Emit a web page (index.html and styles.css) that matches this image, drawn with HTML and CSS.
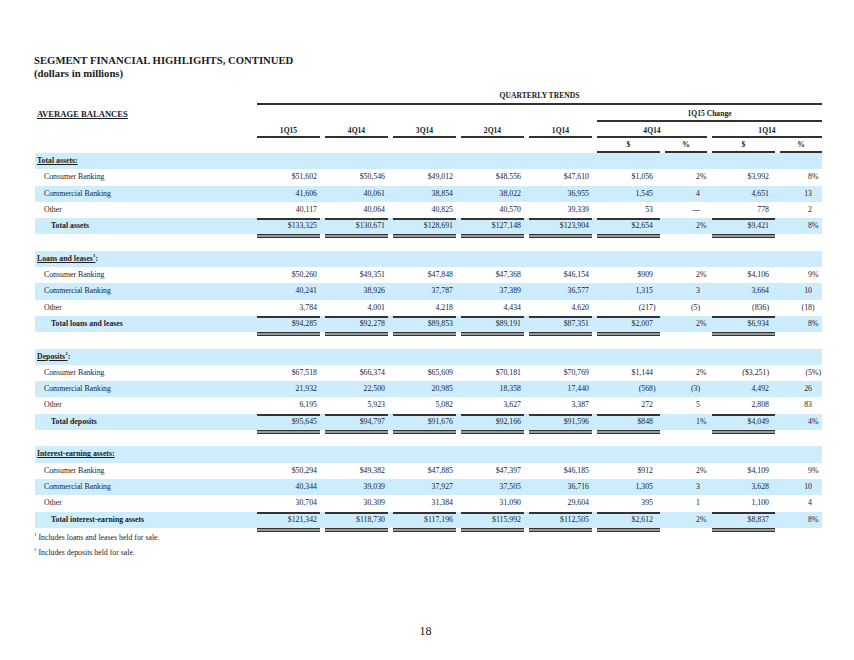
FILE: index.html
```html
<!DOCTYPE html>
<html lang="en">
<head>
    <meta charset="UTF-8">
    <meta name="viewport" content="width=device-width, initial-scale=1.0">
    <title>Segment Financial Highlights, Continued</title>
    <link rel="stylesheet" href="styles.css">
</head>
<body>
    <div class="page">
        <h1 class="title">SEGMENT FINANCIAL HIGHLIGHTS, CONTINUED</h1>
        <div class="subtitle">(dollars in millions)</div>

        <div class="table">
            <!-- column headings -->
            <div class="row head h-trend">
                <div></div>
                <div class="th line span-all">QUARTERLY TRENDS</div>
            </div>
            <div class="row head h-change">
                <div class="section-title"><u>AVERAGE BALANCES</u></div>
                <div class="th line span-change">1Q15 Change</div>
            </div>
            <div class="row head h-quarters">
                <div></div>
                <div class="th line">1Q15</div>
                <div class="th line">4Q14</div>
                <div class="th line">3Q14</div>
                <div class="th line">2Q14</div>
                <div class="th line">1Q14</div>
                <div class="th line span-2">4Q14</div>
                <div class="th line span-2">1Q14</div>
            </div>
            <div class="row head h-units">
                <div></div>
                <div></div><div></div><div></div><div></div><div></div>
                <div class="th line">$</div>
                <div class="th line">%</div>
                <div class="th line">$</div>
                <div class="th line">%</div>
            </div>

            <!-- total assets -->
            <div class="row blue">
                <div class="lbl hdr"><u>Total assets:</u></div>
            </div>
            <div class="row">
                <div class="lbl item">Consumer Banking</div>
                <div class="n">$51,602</div><div class="n">$50,546</div><div class="n">$49,012</div><div class="n">$48,556</div><div class="n">$47,610</div>
                <div class="c">$1,056</div><div class="p1">2<span class="hp">%</span></div>
                <div class="c2">$3,992</div><div class="p2">8<span class="hp">%</span></div>
            </div>
            <div class="row blue">
                <div class="lbl item">Commercial Banking</div>
                <div class="n">41,606</div><div class="n">40,061</div><div class="n">38,854</div><div class="n">38,022</div><div class="n">36,955</div>
                <div class="c">1,545</div><div class="p1">4</div>
                <div class="c2">4,651</div><div class="p2">13</div>
            </div>
            <div class="row">
                <div class="lbl item">Other</div>
                <div class="n ul">40,117</div><div class="n ul">40,064</div><div class="n ul">40,825</div><div class="n ul">40,570</div><div class="n ul">39,339</div>
                <div class="c ul">53</div><div class="p1">&mdash;</div>
                <div class="c2 ul">778</div><div class="p2">2</div>
            </div>
            <div class="row blue">
                <div class="lbl tot">Total assets</div>
                <div class="n dul">$133,325</div><div class="n dul">$130,671</div><div class="n dul">$128,691</div><div class="n dul">$127,148</div><div class="n dul">$123,904</div>
                <div class="c dul">$2,654</div><div class="p1">2<span class="hp">%</span></div>
                <div class="c2 dul">$9,421</div><div class="p2">8<span class="hp">%</span></div>
            </div>
            <div class="row"></div>

            <!-- loans and leases -->
            <div class="row blue">
                <div class="lbl hdr"><u>Loans and leases<sup>1</sup></u>:</div>
            </div>
            <div class="row">
                <div class="lbl item">Consumer Banking</div>
                <div class="n">$50,260</div><div class="n">$49,351</div><div class="n">$47,848</div><div class="n">$47,368</div><div class="n">$46,154</div>
                <div class="c">$909</div><div class="p1">2<span class="hp">%</span></div>
                <div class="c2">$4,106</div><div class="p2">9<span class="hp">%</span></div>
            </div>
            <div class="row blue">
                <div class="lbl item">Commercial Banking</div>
                <div class="n">40,241</div><div class="n">38,926</div><div class="n">37,787</div><div class="n">37,389</div><div class="n">36,577</div>
                <div class="c">1,315</div><div class="p1">3</div>
                <div class="c2">3,664</div><div class="p2">10</div>
            </div>
            <div class="row">
                <div class="lbl item">Other</div>
                <div class="n ul">3,784</div><div class="n ul">4,001</div><div class="n ul">4,218</div><div class="n ul">4,434</div><div class="n ul">4,620</div>
                <div class="c ul">(217<span class="hr">)</span></div><div class="p1">(5)</div>
                <div class="c2 ul">(836)</div><div class="p2">(18<span class="hr">)</span></div>
            </div>
            <div class="row blue">
                <div class="lbl tot">Total loans and leases</div>
                <div class="n dul">$94,285</div><div class="n dul">$92,278</div><div class="n dul">$89,853</div><div class="n dul">$89,191</div><div class="n dul">$87,351</div>
                <div class="c dul">$2,007</div><div class="p1">2<span class="hp">%</span></div>
                <div class="c2 dul">$6,934</div><div class="p2">8<span class="hp">%</span></div>
            </div>
            <div class="row"></div>

            <!-- deposits -->
            <div class="row blue">
                <div class="lbl hdr"><u>Deposits<sup>2</sup></u>:</div>
            </div>
            <div class="row">
                <div class="lbl item">Consumer Banking</div>
                <div class="n">$67,518</div><div class="n">$66,374</div><div class="n">$65,609</div><div class="n">$70,181</div><div class="n">$70,769</div>
                <div class="c">$1,144</div><div class="p1">2<span class="hp">%</span></div>
                <div class="c2">($3,251)</div><div class="p2">(5<span class="hpr">%)</span></div>
            </div>
            <div class="row blue">
                <div class="lbl item">Commercial Banking</div>
                <div class="n">21,932</div><div class="n">22,500</div><div class="n">20,985</div><div class="n">18,358</div><div class="n">17,440</div>
                <div class="c">(568<span class="hr">)</span></div><div class="p1">(3)</div>
                <div class="c2">4,492</div><div class="p2">26</div>
            </div>
            <div class="row">
                <div class="lbl item">Other</div>
                <div class="n ul">6,195</div><div class="n ul">5,923</div><div class="n ul">5,082</div><div class="n ul">3,627</div><div class="n ul">3,387</div>
                <div class="c ul">272</div><div class="p1">5</div>
                <div class="c2 ul">2,808</div><div class="p2">83</div>
            </div>
            <div class="row blue">
                <div class="lbl tot">Total deposits</div>
                <div class="n dul">$95,645</div><div class="n dul">$94,797</div><div class="n dul">$91,676</div><div class="n dul">$92,166</div><div class="n dul">$91,596</div>
                <div class="c dul">$848</div><div class="p1">1<span class="hp">%</span></div>
                <div class="c2 dul">$4,049</div><div class="p2">4<span class="hp">%</span></div>
            </div>
            <div class="row"></div>

            <!-- interest-earning assets -->
            <div class="row blue">
                <div class="lbl hdr"><u>Interest-earning assets:</u></div>
            </div>
            <div class="row">
                <div class="lbl item">Consumer Banking</div>
                <div class="n">$50,294</div><div class="n">$49,382</div><div class="n">$47,885</div><div class="n">$47,397</div><div class="n">$46,185</div>
                <div class="c">$912</div><div class="p1">2<span class="hp">%</span></div>
                <div class="c2">$4,109</div><div class="p2">9<span class="hp">%</span></div>
            </div>
            <div class="row blue">
                <div class="lbl item">Commercial Banking</div>
                <div class="n">40,344</div><div class="n">39,039</div><div class="n">37,927</div><div class="n">37,505</div><div class="n">36,716</div>
                <div class="c">1,305</div><div class="p1">3</div>
                <div class="c2">3,628</div><div class="p2">10</div>
            </div>
            <div class="row">
                <div class="lbl item">Other</div>
                <div class="n ul">30,704</div><div class="n ul">30,309</div><div class="n ul">31,384</div><div class="n ul">31,090</div><div class="n ul">29,604</div>
                <div class="c ul">395</div><div class="p1">1</div>
                <div class="c2 ul">1,100</div><div class="p2">4</div>
            </div>
            <div class="row blue">
                <div class="lbl tot">Total interest-earning assets</div>
                <div class="n dul">$121,342</div><div class="n dul">$118,730</div><div class="n dul">$117,196</div><div class="n dul">$115,992</div><div class="n dul">$112,505</div>
                <div class="c dul">$2,612</div><div class="p1">2<span class="hp">%</span></div>
                <div class="c2 dul">$8,837</div><div class="p2">8<span class="hp">%</span></div>
            </div>
        </div>

        <div class="notes">
            <p><sup>1</sup> Includes loans and leases held for sale.</p>
            <p><sup>2</sup> Includes deposits held for sale.</p>
        </div>
    </div>

    <div class="page-num">18</div>
</body>
</html>
```

FILE: styles.css
```css
* {
    box-sizing: border-box;
}

body {
    margin: 0;
    font-family: 'Liberation Serif', 'Times New Roman', serif;
    color: #1c1c1c;
    background-color: #fff;
}

.page {
    padding: 54px 0 0 34px;
}

.title,
.subtitle {
    margin: 0;
    font-size: 10.7px;
    line-height: 13px;
    font-weight: bold;
}

/* Table grid */
.table {
    margin-left: 1px;
    width: 787px;
}

.row {
    display: grid;
    grid-template-columns: 217px repeat(6, 63px) 42px 63px 42px;
    column-gap: 5px;
    height: 16.3px;
    font-size: 7.8px;
    line-height: 16.3px;
}

.blue {
    background-color: #cdedfc;
}

/* Heading rows */
.head {
    align-items: end;
    line-height: 10px;
}
.h-trend { height: 25px; }
.h-change { height: 17px; }
.h-quarters { height: 16px; }
.h-units { height: 15px; }

.th {
    font-size: 7.6px;
    font-weight: bold;
    text-align: center;
}
.line { border-bottom: 2px solid #333; }
.h-trend .th { padding-bottom: 2px; }
.h-change .th { padding-bottom: 1px; }
.h-units .th { padding-bottom: 1px; }

.span-all { grid-column: 2 / -1; }
.span-change { grid-column: 7 / 11; }
.span-2 { grid-column: span 2; }

.section-title {
    padding: 0 0 3px 2px;
    font-size: 8.6px;
    font-weight: bold;
}

/* Labels */
.lbl { white-space: nowrap; }
.hdr { padding-left: 2px; font-weight: bold; grid-column: 1 / -1; }
.item { padding-left: 9px; }
.tot { padding-left: 16px; font-weight: bold; }

sup {
    font-size: 5px;
    line-height: 0;
    vertical-align: 4px;
}

/* Numbers */
.n, .c, .c2, .p1, .p2 {
    text-align: right;
    white-space: nowrap;
}
.n { padding-right: 3px; }
.c { padding-right: 7px; }
.c2 { padding-right: 6px; }
.p1 { padding-right: 7px; }
.p2 { padding-right: 10px; }

/* hanging % and ) so the digits line up */
.hp { margin-right: -0.83em; }
.hr { margin-right: -0.33em; }
.hpr { margin-right: -1.16em; }

.ul { border-bottom: 2px solid #333; }
.dul { box-shadow: 0 1.5px 0 #333, 0 2.5px 0 #fff, 0 4px 0 #333; }

/* Footnotes */
.notes {
    margin-top: 2px;
    font-size: 7.8px;
    line-height: 15px;
}
.notes p { margin: 0; }

.page-num {
    margin-top: 64px;
    font-size: 12px;
    line-height: 14px;
    text-align: center;
    padding-right: 3px;
}
```
